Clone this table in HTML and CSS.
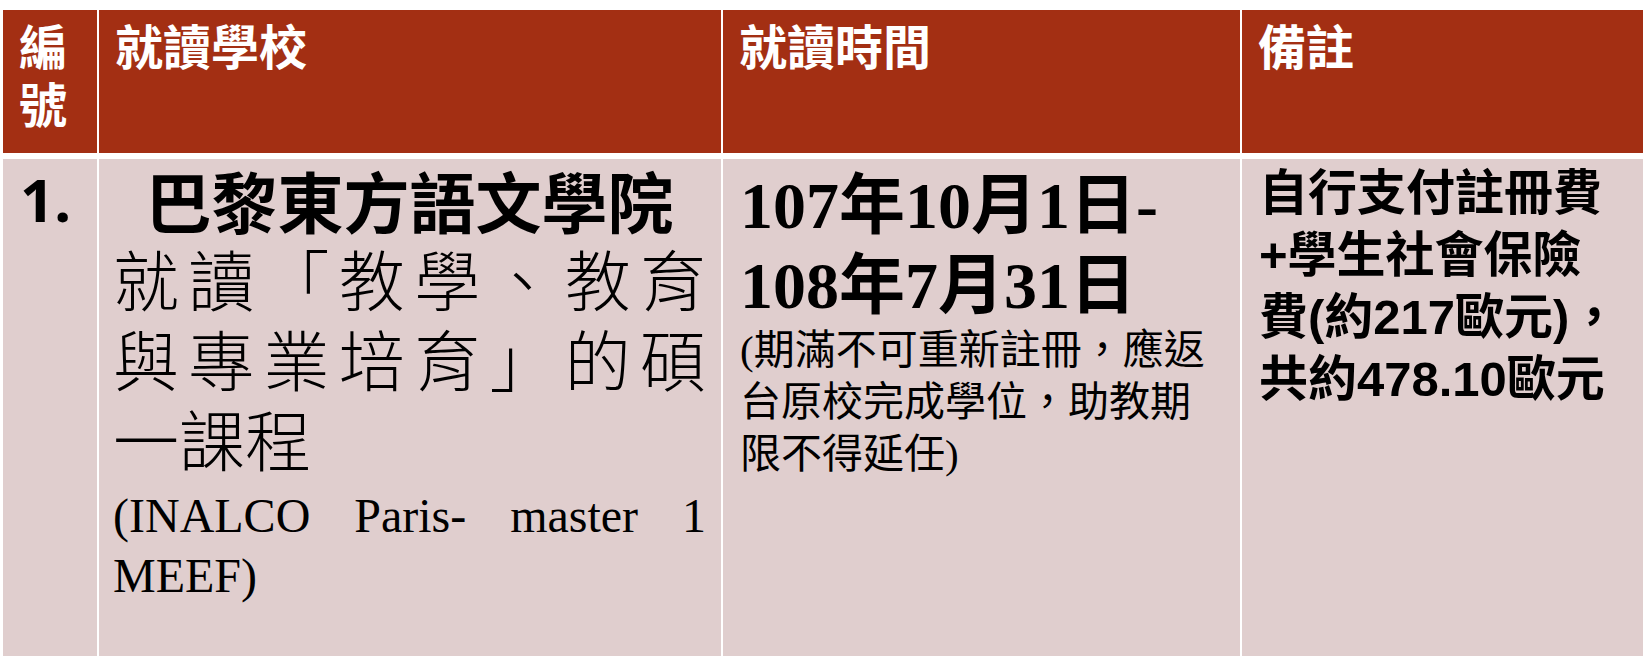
FILE: index.html
```html
<!DOCTYPE html>
<html lang="zh-Hant">
<head>
<meta charset="utf-8">
<title>就讀學校</title>
<link rel="stylesheet" href="styles.css">
</head>
<body>
<div class="table">
  <div class="cell head col-no">編號</div>
  <div class="cell head">就讀學校</div>
  <div class="cell head">就讀時間</div>
  <div class="cell head">備註</div>

  <div class="cell body col-no"><span class="num">1.</span></div>
  <div class="cell body school">
    <div class="title">巴黎東方語文學院</div>
    <div class="desc">
      <span class="jl">就讀「教學、教育</span>
      <span class="jl">與專業培育」的碩</span>
      <span class="ln">一課程</span>
    </div>
    <p class="latin">(INALCO Paris- master 1 MEEF)</p>
  </div>
  <div class="cell body period">
    <div class="dates">107年10月1日-<br>108年7月31日</div>
    <p class="note">(期滿不可重新註冊，應返台原校完成學位，助教期限不得延任)</p>
  </div>
  <div class="cell body remark">
    <div class="fees">
      <span class="fl">自行支付註冊費</span>
      <span class="fl">+學生社會保險</span>
      <span class="fl">費(約217歐元)，</span>
      <span class="fl">共約478.10歐元</span>
    </div>
  </div>
</div>
</body>
</html>
```

FILE: styles.css
```css
html, body {
  margin: 0;
  padding: 0;
  background: #ffffff;
}

.table {
  display: grid;
  grid-template-columns: 94px 622px 517px 401px;
  grid-template-rows: 143px 497px;
  column-gap: 2px;
  row-gap: 6px;
  padding: 10px 0 0 3px;
}

.cell {
  box-sizing: border-box;
  font-family: "Noto Sans CJK TC", "Noto Sans", sans-serif;
}

.head {
  background: #a32f13;
  color: #ffffff;
  font-weight: 700;
  font-size: 48px;
  line-height: 58px;
  padding: 5px 15px 0 16px;
}

.body {
  background: #e0cece;
  color: #000000;
  padding: 0 16px 0 17px;
}

.num {
  display: block;
  font-family: "Noto Sans", "Open Sans", sans-serif;
  font-weight: 700;
  font-size: 60px;
  line-height: 70px;
  padding-top: 5px;
}

.school {
  padding: 0 15px 0 14px;
}

.title {
  text-align: center;
  font-weight: 700;
  font-size: 66px;
  line-height: 80px;
  margin-bottom: 5px;
}

.desc {
  font-family: "Liberation Serif", "Noto Sans CJK TC", serif;
  font-weight: 300;
  font-size: 66px;
  line-height: 80px;
}

.desc .jl,
.desc .ln {
  display: block;
}

.desc .jl {
  text-align: justify;
  text-align-last: justify;
}

.latin {
  margin: 2px 0 0;
  font-family: "Liberation Serif", "Times New Roman", serif;
  font-size: 48px;
  line-height: 60px;
  text-align: justify;
}

.period {
  padding: 7px 17px 0 17px;
}

.dates {
  font-family: "Liberation Serif", "Noto Sans CJK TC", serif;
  font-weight: 700;
  font-size: 66px;
  line-height: 80px;
}

.note {
  margin: -2px 0 0;
  font-family: "Liberation Serif", "Noto Sans CJK TC", serif;
  font-size: 41px;
  line-height: 52px;
}

.remark {
  padding: 3px 8px 0 17px;
}

.fees {
  font-family: "Liberation Sans", "Noto Sans CJK TC", sans-serif;
  font-weight: 700;
  font-size: 49px;
  line-height: 62px;
}

.fees .fl {
  display: block;
  white-space: nowrap;
}
```
